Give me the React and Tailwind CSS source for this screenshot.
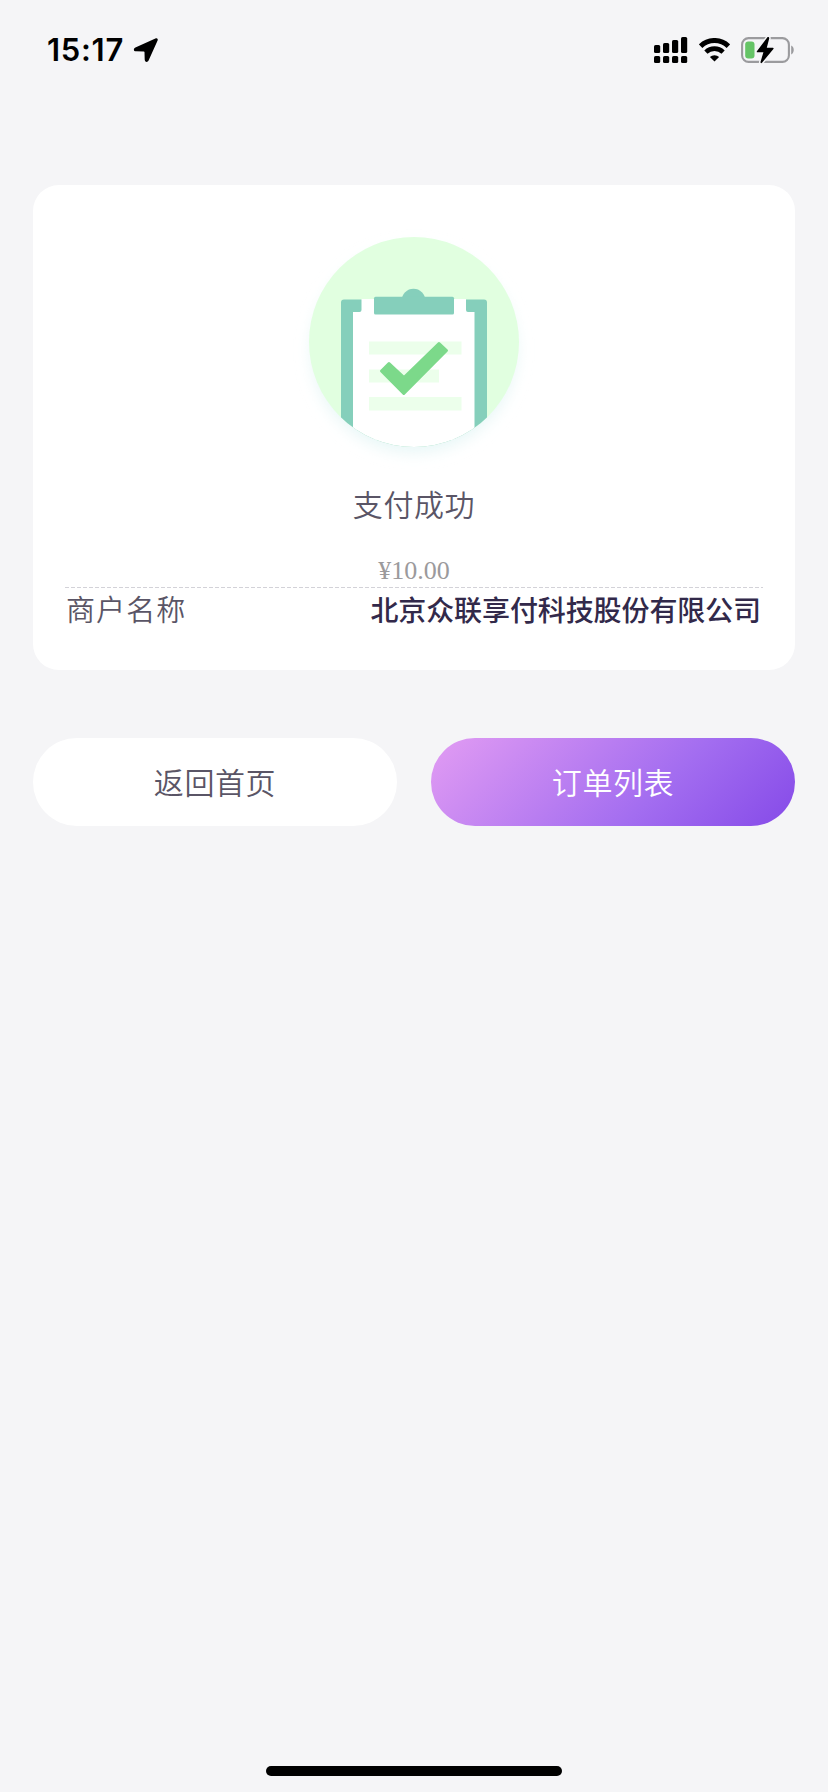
import React from 'react';

const StatusBar = () => (
  <div className="h-[100px] pl-[47px] pr-[32px] flex items-center justify-between text-black">
    <div className="flex items-center gap-[9px]">
      <span className="pb-[2px] font-['Inter',sans-serif] text-[31px] leading-none font-semibold tracking-[0.7px]">15:17</span>
      <svg width="26" height="26" viewBox="0 0 26 26" fill="currentColor">
        <path d="M22.4 1.4 2.4 10.4C.2 11.5.4 14.2 2.9 14.3L10.8 14.6C11.3 14.6 11.5 14.8 11.5 15.3L11.7 22.6C11.8 25.4 14.6 25.7 15.7 23.3L24.6 3.5C25.3 1.8 24.1.6 22.4 1.4Z" />
      </svg>
    </div>

    <div className="flex items-center gap-[11px]">
      {/* Dual SIM signal */}
      <svg width="34" height="26" viewBox="0 0 34 26" fill="currentColor">
        <rect x="0" y="8" width="6.2" height="8" rx="1.6" />
        <rect x="9" y="6" width="6.2" height="10" rx="1.6" />
        <rect x="18" y="3" width="6.2" height="13" rx="1.6" />
        <rect x="27" y="0" width="6.2" height="16" rx="1.6" />
        <rect x="0" y="19" width="6.2" height="7" rx="1.6" />
        <rect x="9" y="19" width="6.2" height="7" rx="1.6" />
        <rect x="18" y="19" width="6.2" height="7" rx="1.6" />
        <rect x="27" y="19" width="6.2" height="7" rx="1.6" />
      </svg>
      {/* Wi-Fi */}
      <svg width="31" height="24" viewBox="0 0 31 24">
        <path d="M1.6 8.1A20 20 0 0 1 29.4 8.1" fill="none" stroke="currentColor" strokeWidth="5" />
        <path d="M6.9 14.1A12.4 12.4 0 0 1 24.1 14.1" fill="none" stroke="currentColor" strokeWidth="4.6" />
        <path d="M15.5 23.6 10.9 19A6.6 6.6 0 0 1 20.1 19Z" fill="currentColor" />
      </svg>
      {/* Battery */}
      <svg width="55" height="28" viewBox="0 0 55 28">
        <rect x="1.1" y="2.1" width="46.8" height="23.8" rx="6.5" fill="none" stroke="#9b9b9e" strokeWidth="2.1" />
        <path d="M50.2 9.6C53.6 10.8 53.6 17.2 50.2 18.4Z" fill="#9b9b9e" />
        <rect x="4.2" y="5.4" width="9.3" height="17.2" rx="3" fill="#65c466" />
        <path
          d="M26.2 1.6 15.9 15.2C15.5 15.8 15.8 16.3 16.5 16.3L22.4 16.3 19.5 26C19.2 27.1 20.3 27.6 21 26.7L32.4 13C32.9 12.4 32.6 11.8 31.9 11.8L25.8 11.8 28.2 2.5C28.5 1.3 27 .6 26.2 1.6Z"
          fill="currentColor"
          stroke="#f5f5f7"
          strokeWidth="3"
          paintOrder="stroke"
        />
      </svg>
    </div>
  </div>
);

const SuccessIcon = () => (
  <svg width="250" height="250" viewBox="-1 0 250 250">
    <defs>
      <clipPath id="disc">
        <circle cx="124" cy="122" r="105" />
      </clipPath>
      <filter id="glow" x="-20%" y="-20%" width="140%" height="140%">
        <feGaussianBlur stdDeviation="8" />
      </filter>
    </defs>
    <circle cx="124" cy="130" r="102" fill="#e6f6f6" filter="url(#glow)" />
    <g clipPath="url(#disc)">
      <rect width="250" height="250" fill="#e1ffe0" />
      <rect x="51" y="79.5" width="146" height="170" rx="3" fill="#85cfbb" />
      <path d="M71.5 79H86V250H63V92H69.5Q71.5 92 71.5 90Z" fill="#fff" />
      <path d="M176 79H161V250H184.5V92H178Q176 92 176 90Z" fill="#fff" />
      <rect x="84" y="79" width="80" height="171" fill="#fff" />
      <rect x="79" y="121.5" width="92.5" height="13" fill="#ecffeb" />
      <rect x="79" y="149.5" width="70" height="13" fill="#ecffeb" />
      <rect x="79" y="177" width="92.5" height="13.5" fill="#ecffeb" />
      <circle cx="123.5" cy="80.5" r="11.8" fill="#85cfbb" />
      <rect x="84" y="76.8" width="80" height="17.7" rx="1.5" fill="#85cfbb" />
    </g>
    <path
      d="M99 143.5 91.5 151 113.8 173.5 156.5 130.5 149 123.5 114 157.5Z"
      fill="#7cd98a"
      stroke="#7cd98a"
      strokeWidth="3"
      strokeLinejoin="round"
    />
  </svg>
);

const App = () => {
  const rows = [{ label: '商户名称', value: '北京众联享付科技股份有限公司' }];

  return (
    <div className="w-full h-[1792px] bg-[#f5f5f7] flex flex-col font-['Noto_Sans_CJK_SC',sans-serif]">
      <StatusBar />

      <main className="flex-1 px-[33px] pt-[85px]">
        <section className="h-[485px] rounded-[26px] bg-white px-8 pt-[35px]">
          <div className="h-[250px] flex justify-center">
            <SuccessIcon />
          </div>
          <h1 className="mt-[13px] h-10 text-center text-[30px] leading-10 font-[350] tracking-[0.6px] text-[#5a5566]">支付成功</h1>
          <p className="mt-[34px] h-[29px] text-center font-['Liberation_Serif',serif] text-[26px] leading-[27px] text-[#9b9a9c]">
            ¥10.00
          </p>
          <svg className="block w-full h-[2px]" viewBox="0 0 698 2">
            <path d="M0 1.5H698" stroke="#d3d2d8" strokeWidth="1" strokeDasharray="4 2" />
          </svg>
          {rows.map((row) => (
            <div key={row.label} className="flex items-center justify-between h-[41px] pl-px pr-[2px]">
              <span className="text-[29px] leading-none font-[350] tracking-[1.1px] text-[#5a5566]">{row.label}</span>
              <span className="text-[28px] leading-none font-medium tracking-[-0.1px] text-[#32294a]">{row.value}</span>
            </div>
          ))}
        </section>

        <div className="mt-[68px] grid grid-cols-2 gap-[34px]">
          <button className="h-[88px] rounded-full bg-white pb-[2px] text-[30px] font-[350] tracking-[0.6px] text-[#5a5566]">
            返回首页
          </button>
          <button className="h-[88px] rounded-full bg-[linear-gradient(135deg,#e29cf3_0%,#a36df0_62%,#854ae8_100%)] pb-[2px] text-[30px] font-[350] tracking-[0.6px] text-white">
            订单列表
          </button>
        </div>
      </main>

      <div className="mb-4 h-[10px] w-[296px] self-center rounded-full bg-black" />
    </div>
  );
};

export default App;
